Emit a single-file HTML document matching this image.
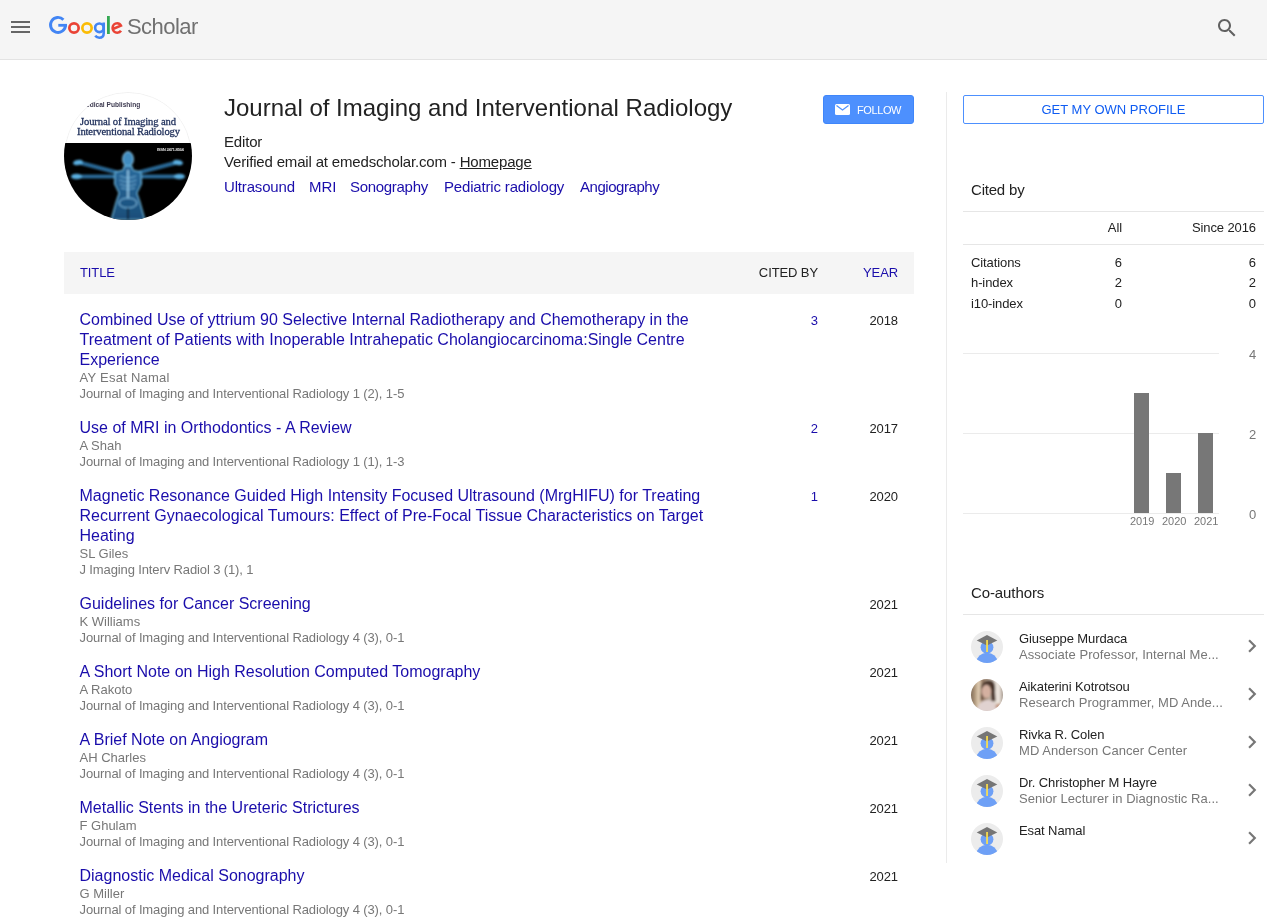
<!DOCTYPE html>
<html><head><meta charset="utf-8">
<style>
html,body{margin:0;padding:0;background:#fff;width:1267px;height:924px;overflow:hidden;position:relative;font-family:"Liberation Sans",sans-serif;color:#222}
#wrap{position:absolute;left:0;top:0;width:1267px;height:924px;will-change:transform}
.a{position:absolute;white-space:nowrap}
.s13{font-size:13px;line-height:13px;letter-spacing:-0.1px}
.s14{font-size:14px;line-height:14px}
.s15{font-size:15px;line-height:15px;letter-spacing:-0.17px}
.lk{color:#1a0dab}
.gr{color:#777}
#hdr{position:absolute;left:0;top:0;width:1267px;height:59px;background:#f5f5f5;border-bottom:1px solid #e3e3e3}
.row{position:absolute;left:79.5px;width:640px}
.row .ti{font-size:16px;line-height:20px;color:#1a0dab;white-space:normal}
.row .au,.row .jo{font-size:13px;line-height:16px;color:#777;letter-spacing:-0.1px;white-space:nowrap}
.row .au{letter-spacing:0px}
.row .jo{letter-spacing:-0.12px}
.num{position:absolute;font-size:13px;line-height:13px;text-align:right;letter-spacing:-0.1px}
.hl{position:absolute;left:963px;width:301px;height:1px;background:#e6e6e6}
.gl{position:absolute;left:963px;width:256px;height:1px;background:#ebebeb}
.bar{position:absolute;width:15px;background:#777;bottom:411px}
.yl{position:absolute;font-size:11px;line-height:11px;color:#777;white-space:nowrap}
.ax{position:absolute;font-size:13px;line-height:13px;color:#777}
.ca{position:absolute;left:971px;width:32px;height:32px}
.cn{position:absolute;left:1019px;font-size:13px;line-height:13px;color:#222;white-space:nowrap;letter-spacing:-0.1px}
.cs{position:absolute;left:1019px;font-size:13px;line-height:13px;color:#777;white-space:nowrap;letter-spacing:0.05px}
.chev{position:absolute;left:1238.5px;width:26px;height:26px}
</style></head><body>
<div id="wrap">

<!-- HEADER -->
<div id="hdr"></div>
<svg class="a" style="left:8px;top:15px" width="24" height="24" viewBox="0 0 24 24"><path fill="#666" d="M3 6h19v2H3zM3 11h19v2H3zM3 16h19v2H3z"/></svg>
<svg class="a" style="left:45px;top:12px" width="80" height="30" viewBox="0 0 80 30">
  <path d="M18.4 7.7 A7.5 7.5 0 1 0 20.5 13.4" fill="none" stroke="#4285f4" stroke-width="2.9"/>
  <rect x="13.3" y="11.9" width="8.7" height="2.8" fill="#4285f4"/>
  <circle cx="29" cy="16" r="4.65" fill="none" stroke="#ea4335" stroke-width="2.7"/>
  <circle cx="42" cy="16" r="4.65" fill="none" stroke="#fbbc05" stroke-width="2.7"/>
  <circle cx="54.4" cy="15.8" r="4.3" fill="none" stroke="#4285f4" stroke-width="2.6"/>
  <path d="M58.7 10.5 V21.2 C58.7 24.6 56.6 25.7 54.2 25.7 C52.4 25.7 51.1 24.9 50.3 23.6" fill="none" stroke="#4285f4" stroke-width="2.6"/>
  <rect x="62" y="4" width="2.8" height="18" fill="#34a853"/>
  <path d="M67.9 17 L75.9 13.6 C75.1 12 73.7 11.3 72.2 11.3 C69.6 11.3 67.6 13.4 67.6 16 C67.6 18.7 69.6 20.7 72.3 20.7 C73.9 20.7 75.2 20 76 18.8" fill="none" stroke="#ea4335" stroke-width="2.6"/>
</svg>
<div class="a" style="left:127px;top:16px;font-size:22px;line-height:22px;color:#707070;letter-spacing:-0.55px">Scholar</div>
<svg class="a" style="left:1215px;top:16px" width="24" height="24" viewBox="0 0 24 24"><path fill="#616161" d="M15.5 14h-.79l-.28-.27C15.41 12.59 16 11.11 16 9.5 16 5.91 13.09 3 9.5 3S3 5.91 3 9.5 5.91 16 9.5 16c1.61 0 3.09-.59 4.23-1.57l.27.28v.79l5 4.99L20.49 19l-4.99-5zm-6 0C7.01 14 5 11.99 5 9.5S7.01 5 9.5 5 14 7.01 14 9.5 11.99 14 9.5 14z"/></svg>

<!-- PROFILE -->
<svg class="a" style="left:64px;top:92px" width="128" height="128" viewBox="0 0 128 128">
  <defs><clipPath id="pc"><circle cx="64" cy="64" r="64"/></clipPath>
  <filter id="glow" x="-30%" y="-30%" width="160%" height="160%"><feGaussianBlur stdDeviation="0.8"/></filter>
  <linearGradient id="bodyg" x1="0" y1="0" x2="0" y2="1"><stop offset="0" stop-color="#2a6a9c"/><stop offset="1" stop-color="#1a4e7a"/></linearGradient></defs>
  <g clip-path="url(#pc)">
    <rect width="128" height="128" fill="#fff"/>
        <circle cx="64" cy="64" r="63.6" fill="none" stroke="#eeeeee" stroke-width="0.8"/>
    <rect y="51" width="128" height="77" fill="#000"/>
    <text x="22" y="15" font-family="Liberation Sans" font-weight="bold" font-size="6.6" fill="#3d3a50">edical Publishing</text>
    <text x="64" y="33" text-anchor="middle" font-family="Liberation Serif" font-size="10.6" fill="#24345e" stroke="#24345e" stroke-width="0.3" textLength="96">Journal of Imaging and</text>
    <text x="64.5" y="42.6" text-anchor="middle" font-family="Liberation Serif" font-size="10.6" fill="#24345e" stroke="#24345e" stroke-width="0.3" textLength="103">Interventional Radiology</text>
    <text x="93" y="58.5" font-family="Liberation Sans" font-weight="bold" font-size="4.3" fill="#ddd" textLength="27">ISSN 2471-8564</text>
    <g filter="url(#glow)">
      <g stroke-linecap="round" fill="none">
        <path d="M55 81 L17 71" stroke="#3f93cc" stroke-width="3.6"/>
        <path d="M73 81 L111 71" stroke="#3f93cc" stroke-width="3.6"/>
        <path d="M55 84.5 L15 84.5" stroke="#3f93cc" stroke-width="3.4"/>
        <path d="M73 84.5 L113 84.5" stroke="#3f93cc" stroke-width="3.4"/>
        <path d="M55 81 L17 71 M73 81 L111 71 M55 84.5 L15 84.5 M73 84.5 L113 84.5" stroke="#17466e" stroke-width="1.3"/>
      </g>
      <ellipse cx="14" cy="70.5" rx="5" ry="2.6" fill="#5aaee0" transform="rotate(-12 14 70.5)"/>
      <ellipse cx="114" cy="70.5" rx="5" ry="2.6" fill="#5aaee0" transform="rotate(12 114 70.5)"/>
      <ellipse cx="12.5" cy="84.5" rx="5.5" ry="2.8" fill="#5aaee0"/>
      <ellipse cx="115.5" cy="84.5" rx="5.5" ry="2.8" fill="#5aaee0"/>
      <ellipse cx="64" cy="67.2" rx="5.4" ry="7.6" fill="#3f8cc0" stroke="#9ad8f7" stroke-width="0.9"/>
      <path d="M60 74 L68 74 L69 78 L77 80 L77.5 92 L73 101 L76 110 L81 128 L47 128 L52 110 L55 101 L50.5 92 L51 80 L59 78 Z" fill="url(#bodyg)" stroke="#76c6ee" stroke-width="1"/>
      <path d="M64 78 V106" stroke="#b5e6ff" stroke-width="1.3"/>
      <path d="M56 84 Q64 88 72 84 M55.5 88 Q64 92 72.5 88 M56 92 Q64 96 72 92 M57 96 Q64 99 71 96" stroke="#8ed0f5" stroke-width="0.7" fill="none"/>
      <ellipse cx="64" cy="111" rx="9" ry="5" fill="none" stroke="#8ed0f5" stroke-width="0.9"/>
      <path d="M64 116 V128" stroke="#0a1c2c" stroke-width="1.6"/>
    </g>
  </g>
</svg>
<div class="a" style="left:224px;top:96px;font-size:24px;line-height:24px;color:#222">Journal of Imaging and Interventional Radiology</div>
<div class="a s15" style="left:224px;top:134px">Editor</div>
<div class="a s15" style="left:224px;top:154px">Verified email at emedscholar.com - <span style="text-decoration:underline">Homepage</span></div>
<div class="a s15 lk" style="left:224px;top:179px">Ultrasound</div>
<div class="a s15 lk" style="left:309px;top:179px;letter-spacing:0">MRI</div>
<div class="a s15 lk" style="left:350px;top:179px;letter-spacing:-0.3px">Sonography</div>
<div class="a s15 lk" style="left:444px;top:179px">Pediatric radiology</div>
<div class="a s15 lk" style="left:580px;top:179px;letter-spacing:-0.45px">Angiography</div>

<!-- FOLLOW -->
<div class="a" style="left:823px;top:95px;width:89px;height:27px;background:#4d90fe;border:1px solid #3f86fa;border-radius:3px"></div>
<svg class="a" style="left:835px;top:104px" width="15" height="11" viewBox="0 0 15 11"><rect x="0" y="0" width="15" height="11" rx="1.5" fill="#fff"/><path d="M1.5 1.5 L7.5 6 L13.5 1.5" fill="none" stroke="#4d90fe" stroke-width="1.2"/></svg>
<div class="a" style="left:857px;top:105px;font-size:11px;line-height:11px;color:#fff;letter-spacing:-0.4px">FOLLOW</div>

<!-- ARTICLES HEADER -->
<div class="a" style="left:64px;top:252px;width:850px;height:42px;background:#f5f5f5"></div>
<div class="a s13 lk" style="left:80px;top:266px">TITLE</div>
<div class="a s13" style="left:758px;top:266px;width:60px;text-align:right">CITED BY</div>
<div class="a s13 lk" style="left:838px;top:266px;width:60px;text-align:right">YEAR</div>

<!-- ROWS -->
<div class="row" style="top:310px"><div class="ti" style="white-space:nowrap">Combined Use of yttrium 90 Selective Internal Radiotherapy and Chemotherapy in the<br>Treatment of Patients with Inoperable Intrahepatic Cholangiocarcinoma:Single Centre<br>Experience</div><div class="au" style="letter-spacing:0.25px">AY Esat Namal</div><div class="jo">Journal of Imaging and Interventional Radiology 1 (2), 1-5</div></div>
<div class="num lk" style="left:758px;top:314px;width:60px">3</div>
<div class="num" style="left:838px;top:314px;width:60px">2018</div>
<div class="row" style="top:418px"><div class="ti" style="white-space:nowrap">Use of MRI in Orthodontics - A Review</div><div class="au">A Shah</div><div class="jo">Journal of Imaging and Interventional Radiology 1 (1), 1-3</div></div>
<div class="num lk" style="left:758px;top:422px;width:60px">2</div>
<div class="num" style="left:838px;top:422px;width:60px">2017</div>
<div class="row" style="top:486px"><div class="ti" style="white-space:nowrap">Magnetic Resonance Guided High Intensity Focused Ultrasound (MrgHIFU) for Treating<br>Recurrent Gynaecological Tumours: Effect of Pre-Focal Tissue Characteristics on Target<br>Heating</div><div class="au">SL Giles</div><div class="jo">J Imaging Interv Radiol 3 (1), 1</div></div>
<div class="num lk" style="left:758px;top:490px;width:60px">1</div>
<div class="num" style="left:838px;top:490px;width:60px">2020</div>
<div class="row" style="top:594px"><div class="ti" style="white-space:nowrap">Guidelines for Cancer Screening</div><div class="au">K Williams</div><div class="jo">Journal of Imaging and Interventional Radiology 4 (3), 0-1</div></div>
<div class="num" style="left:838px;top:598px;width:60px">2021</div>
<div class="row" style="top:662px"><div class="ti" style="white-space:nowrap">A Short Note on High Resolution Computed Tomography</div><div class="au">A Rakoto</div><div class="jo">Journal of Imaging and Interventional Radiology 4 (3), 0-1</div></div>
<div class="num" style="left:838px;top:666px;width:60px">2021</div>
<div class="row" style="top:730px"><div class="ti" style="white-space:nowrap">A Brief Note on Angiogram</div><div class="au">AH Charles</div><div class="jo">Journal of Imaging and Interventional Radiology 4 (3), 0-1</div></div>
<div class="num" style="left:838px;top:734px;width:60px">2021</div>
<div class="row" style="top:798px"><div class="ti" style="white-space:nowrap">Metallic Stents in the Ureteric Strictures</div><div class="au">F Ghulam</div><div class="jo">Journal of Imaging and Interventional Radiology 4 (3), 0-1</div></div>
<div class="num" style="left:838px;top:802px;width:60px">2021</div>
<div class="row" style="top:866px"><div class="ti" style="white-space:nowrap">Diagnostic Medical Sonography</div><div class="au">G Miller</div><div class="jo">Journal of Imaging and Interventional Radiology 4 (3), 0-1</div></div>
<div class="num" style="left:838px;top:870px;width:60px">2021</div>

<!-- RIGHT COLUMN -->
<div class="a" style="left:946px;top:92px;width:1px;height:771px;background:#ebebeb"></div>
<div class="a" style="left:963px;top:95px;width:299px;height:27px;border:1px solid #4d90fe;border-radius:2px"></div>
<div class="a s13" style="left:963px;top:103px;width:301px;text-align:center;color:#0f5cf2;letter-spacing:0">GET MY OWN PROFILE</div>

<div class="a s15" style="left:971px;top:182px;letter-spacing:-0.2px">Cited by</div>
<div class="hl" style="top:211px"></div>
<div class="num" style="left:1062px;top:221px;width:60px">All</div>
<div class="num" style="left:1156px;top:221px;width:100px">Since 2016</div>
<div class="hl" style="top:244px"></div>
<div class="a s13" style="left:971px;top:256px">Citations</div>
<div class="num" style="left:1062px;top:256px;width:60px">6</div>
<div class="num" style="left:1156px;top:256px;width:100px">6</div>
<div class="a s13" style="left:971px;top:276px">h-index</div>
<div class="num" style="left:1062px;top:276px;width:60px">2</div>
<div class="num" style="left:1156px;top:276px;width:100px">2</div>
<div class="a s13" style="left:971px;top:297px">i10-index</div>
<div class="num" style="left:1062px;top:297px;width:60px">0</div>
<div class="num" style="left:1156px;top:297px;width:100px">0</div>

<!-- CHART -->
<div class="gl" style="top:353px"></div>
<div class="gl" style="top:433px"></div>
<div class="gl" style="top:513px"></div>
<div class="bar" style="left:1134px;top:393px;height:120px"></div>
<div class="bar" style="left:1166px;top:473px;height:40px"></div>
<div class="bar" style="left:1198px;top:433px;height:80px"></div>
<div class="yl" style="left:1130px;top:516px">2019</div>
<div class="yl" style="left:1162px;top:516px">2020</div>
<div class="yl" style="left:1194px;top:516px">2021</div>
<div class="ax" style="left:1249px;top:348px">4</div>
<div class="ax" style="left:1249px;top:428px">2</div>
<div class="ax" style="left:1249px;top:508px">0</div>

<!-- CO-AUTHORS -->
<div class="a s15" style="left:971px;top:585px;letter-spacing:-0.1px">Co-authors</div>
<div class="hl" style="top:614px"></div>
<svg class="ca" style="top:631px" viewBox="0 0 32 32"><circle cx="16" cy="16" r="16" fill="#ececec"/><clipPath id="cc0"><circle cx="16" cy="16" r="16"/></clipPath><g clip-path="url(#cc0)"><circle cx="16" cy="16.3" r="6.4" fill="#6ea0f6"/><ellipse cx="16" cy="31.5" rx="10.6" ry="9.8" fill="#6ea0f6"/></g><path d="M16 4 L26.3 9.6 L16 14.6 L5.7 9.6 Z" fill="#757575"/><rect x="15.2" y="9" width="1.7" height="12" fill="#fde04a"/></svg>
<div class="cn" style="top:632px">Giuseppe Murdaca</div>
<div class="cs" style="top:648px">Associate Professor, Internal Me...</div>
<svg class="chev" style="top:633px" viewBox="0 0 24 24"><path fill="#777" d="M10 6L8.59 7.41 13.17 12l-4.58 4.59L10 18l6-6z"/></svg>
<svg class="ca" style="top:679px" viewBox="0 0 32 32"><defs><linearGradient id="pg" x1="0" y1="0" x2="1" y2="0"><stop offset="0" stop-color="#6f5f50"/><stop offset="0.14" stop-color="#a48c70"/><stop offset="0.28" stop-color="#e6d3ba"/><stop offset="0.38" stop-color="#8a6f58"/><stop offset="0.68" stop-color="#d6ccc2"/><stop offset="0.82" stop-color="#f2ebe4"/><stop offset="1" stop-color="#8b7c6f"/></linearGradient><clipPath id="ppc"><circle cx="16" cy="16" r="16"/></clipPath><filter id="pbl" x="-10%" y="-10%" width="120%" height="120%"><feGaussianBlur stdDeviation="1"/></filter></defs><g clip-path="url(#ppc)"><g filter="url(#pbl)"><rect x="-2" y="-2" width="36" height="36" fill="url(#pg)"/><path d="M10 9 C11 2 17 0.5 21 1.8 C24 3.2 24.5 8 24 13 L24.5 22 L20.5 22.5 L19.5 12 Z" fill="#4a362b"/><path d="M10.2 8 L9.5 21 L12 21 L12.5 10 Z" fill="#6b5040"/><ellipse cx="15.4" cy="12.4" rx="4.7" ry="6.6" fill="#d4b0a0"/><path d="M5 33 C7 25 11 21 16 21 C21 21 25 23 27.5 33 Z" fill="#e0d2d0"/><circle cx="27.5" cy="27.5" r="3" fill="#c49c86"/></g></g></svg>
<div class="cn" style="top:680px">Aikaterini Kotrotsou</div>
<div class="cs" style="top:696px">Research Programmer, MD Ande...</div>
<svg class="chev" style="top:681px" viewBox="0 0 24 24"><path fill="#777" d="M10 6L8.59 7.41 13.17 12l-4.58 4.59L10 18l6-6z"/></svg>
<svg class="ca" style="top:727px" viewBox="0 0 32 32"><circle cx="16" cy="16" r="16" fill="#ececec"/><clipPath id="cc2"><circle cx="16" cy="16" r="16"/></clipPath><g clip-path="url(#cc2)"><circle cx="16" cy="16.3" r="6.4" fill="#6ea0f6"/><ellipse cx="16" cy="31.5" rx="10.6" ry="9.8" fill="#6ea0f6"/></g><path d="M16 4 L26.3 9.6 L16 14.6 L5.7 9.6 Z" fill="#757575"/><rect x="15.2" y="9" width="1.7" height="12" fill="#fde04a"/></svg>
<div class="cn" style="top:728px">Rivka R. Colen</div>
<div class="cs" style="top:744px">MD Anderson Cancer Center</div>
<svg class="chev" style="top:729px" viewBox="0 0 24 24"><path fill="#777" d="M10 6L8.59 7.41 13.17 12l-4.58 4.59L10 18l6-6z"/></svg>
<svg class="ca" style="top:775px" viewBox="0 0 32 32"><circle cx="16" cy="16" r="16" fill="#ececec"/><clipPath id="cc3"><circle cx="16" cy="16" r="16"/></clipPath><g clip-path="url(#cc3)"><circle cx="16" cy="16.3" r="6.4" fill="#6ea0f6"/><ellipse cx="16" cy="31.5" rx="10.6" ry="9.8" fill="#6ea0f6"/></g><path d="M16 4 L26.3 9.6 L16 14.6 L5.7 9.6 Z" fill="#757575"/><rect x="15.2" y="9" width="1.7" height="12" fill="#fde04a"/></svg>
<div class="cn" style="top:776px">Dr. Christopher M Hayre</div>
<div class="cs" style="top:792px">Senior Lecturer in Diagnostic Ra...</div>
<svg class="chev" style="top:777px" viewBox="0 0 24 24"><path fill="#777" d="M10 6L8.59 7.41 13.17 12l-4.58 4.59L10 18l6-6z"/></svg>
<svg class="ca" style="top:823px" viewBox="0 0 32 32"><circle cx="16" cy="16" r="16" fill="#ececec"/><clipPath id="cc4"><circle cx="16" cy="16" r="16"/></clipPath><g clip-path="url(#cc4)"><circle cx="16" cy="16.3" r="6.4" fill="#6ea0f6"/><ellipse cx="16" cy="31.5" rx="10.6" ry="9.8" fill="#6ea0f6"/></g><path d="M16 4 L26.3 9.6 L16 14.6 L5.7 9.6 Z" fill="#757575"/><rect x="15.2" y="9" width="1.7" height="12" fill="#fde04a"/></svg>
<div class="cn" style="top:824px">Esat Namal</div>
<svg class="chev" style="top:825px" viewBox="0 0 24 24"><path fill="#777" d="M10 6L8.59 7.41 13.17 12l-4.58 4.59L10 18l6-6z"/></svg>

</div>
</body></html>
